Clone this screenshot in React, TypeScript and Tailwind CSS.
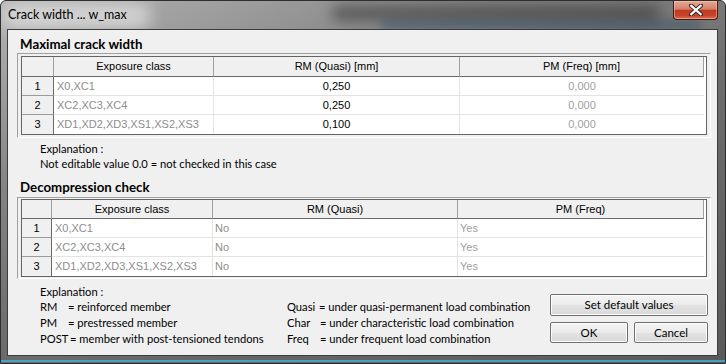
import type { FC, ReactNode } from 'react';

const UI = "font-['Lato','Noto_Sans',sans-serif]";
const GRID = "font-['Liberation_Sans',Arial,sans-serif] text-[11px]";

type Cell = { text: string; cls: string };

interface GridProps {
    cols: string;
    headers: string[];
    rows: Cell[][];
    headH: string;
    padY: string;
}

const Grid: FC<GridProps> = ({ cols, headers, rows, headH, padY }) => (
    <div className={`ml-[9px] w-[694px] border border-t-[#a0a0a0] border-l-[#a0a0a0] border-r-white border-b-white bg-[#f0f0f0] px-[3px] ${padY}`}>
        <div className={`grid border border-[#646464] bg-white ${GRID} ${cols}`}>
            <div className={`border-r border-b border-r-[#a0a0a0] border-b-[#696969] bg-[#f0f0f0] ${headH}`} />
            {headers.map((h) => (
                <div
                    key={h}
                    className={`flex items-center justify-center border-r border-b border-r-[#a0a0a0] border-b-[#696969] bg-[#f0f0f0] text-black last:border-r-0 ${headH}`}
                >
                    {h}
                </div>
            ))}
            {rows.map((row, i) => (
                <Row key={i} n={i + 1} cells={row} last={i === rows.length - 1} />
            ))}
        </div>
    </div>
);

const Row: FC<{ n: number; cells: Cell[]; last: boolean }> = ({ n, cells, last }) => (
    <>
        <div
            className={`flex h-[19px] items-center justify-center border-r border-r-[#696969] bg-[#f0f0f0] text-black ${last ? '' : 'border-b border-b-[#9a9a9a]'}`}
        >
            {n}
        </div>
        {cells.map((c, j) => (
            <div
                key={j}
                className={`flex h-[19px] items-center border-[#e3e3e3] ${j < cells.length - 1 ? 'border-r' : ''} ${last ? '' : 'border-b'} ${c.cls}`}
            >
                {c.text}
            </div>
        ))}
    </>
);

const classes = ['X0,XC1', 'XC2,XC3,XC4', 'XD1,XD2,XD3,XS1,XS2,XS3'];
const crack = ['0,250', '0,250', '0,100'];

const crackRows: Cell[][] = classes.map((c, i) => [
    { text: c, cls: 'pl-[3px] text-[#8d8d8d]' },
    { text: crack[i], cls: 'justify-center text-black' },
    { text: '0,000', cls: 'justify-center text-[#a0a0a0]' },
]);

const decoRows: Cell[][] = classes.map((c) => [
    { text: c, cls: 'pl-[3px] text-[#8d8d8d]' },
    { text: 'No', cls: 'pl-[2px] text-[#8d8d8d]' },
    { text: 'Yes', cls: 'pl-[2px] text-[#a0a0a0]' },
]);

const Button: FC<{ w: string; children: ReactNode }> = ({ w, children }) => (
    <div
        className={`flex items-center justify-center rounded-[2px] border border-[#707070] bg-[linear-gradient(#f4f4f4,#ebebeb_50%,#e2e2e2_51%,#dadada)] text-[11.5px] text-black shadow-[inset_0_0_0_1px_#fcfcfc] ${w}`}
    >
        {children}
    </div>
);

const CloseButton: FC = () => (
    <div className="absolute right-[7px] top-0 flex h-[19px] w-[45px] items-center justify-center rounded-b-[4px] border border-t-0 border-[#4a1a12] bg-[linear-gradient(#e7a995_0%,#d4806a_45%,#c13a20_52%,#c4452b_80%,#de7258_100%)] shadow-[inset_0_0_0_1px_rgba(255,210,200,0.45)]">
        <svg width="14" height="12" viewBox="0 0 14 12">
            <path d="M2 1.5 L12 10.5 M12 1.5 L2 10.5" stroke="#3b2a2a" strokeWidth="4.2" strokeLinecap="square" />
            <path d="M2.3 1.8 L11.7 10.2 M11.7 1.8 L2.3 10.2" stroke="#ffffff" strokeWidth="2.2" strokeLinecap="square" />
        </svg>
    </div>
);

const App: FC = () => (
    <div className={`relative h-[364px] w-[726px] overflow-hidden rounded-t-[6px] border border-[#2e2e2e] bg-[linear-gradient(160deg,#b4b4b4_0%,#848484_30%,#6c6c6c_55%,#5a5a5a_100%)] ${UI}`}>
        <div className="absolute left-[330px] top-[4px] h-[16px] w-[330px] rounded-full bg-[#262626] opacity-50 blur-[7px]" />
        <div className="absolute left-[380px] top-[20px] h-[8px] w-[320px] rounded-full bg-[#1f4660] opacity-50 blur-[5px]" />
        <div className="absolute left-0 top-[2px] h-[26px] w-[150px] rounded-full bg-[#e6e6e6] opacity-70 blur-[8px]" />
        <div className="relative flex h-[28px] items-center pl-[7px] text-[12.5px] text-black">Crack width ... w_max</div>
        <CloseButton />

        <div className="relative ml-[6px] h-[327px] w-[711px] border border-[#3c3c3c] bg-[#f0f0f0] text-[11.2px] text-black">
            <div className="ml-[12px] mt-[6px] h-[16px] text-[13.3px] font-bold leading-[16px]">Maximal crack width</div>
            <div className="mt-[1px]">
                <Grid
                    cols="grid-cols-[32px_160px_246px_244px]"
                    headers={['Exposure class', 'RM (Quasi) [mm]', 'PM (Freq) [mm]']}
                    rows={crackRows}
                    headH="h-[20px]"
                    padY="py-[2px]"
                />
            </div>

            <div className="ml-[32px] mt-[3px] leading-[15px]">
                <div>Explanation :</div>
                <div>Not editable value 0.0 = not checked in this case</div>
            </div>

            <div className="ml-[12px] mt-[8px] h-[16px] text-[13.3px] font-bold leading-[16px]">Decompression check</div>
            <div className="mt-[2px]">
                <Grid
                    cols="grid-cols-[30px_161px_245px_246px]"
                    headers={['Exposure class', 'RM (Quasi)', 'PM (Freq)']}
                    rows={decoRows}
                    headH="h-[19px]"
                    padY="py-[1px]"
                />
            </div>

            <div className="mt-[5px] flex leading-[16px]">
                <div className="ml-[32px] w-[247px] whitespace-nowrap">
                    <div className="h-[15px] leading-[15px]">Explanation :</div>
                    <div><span className="inline-block w-[28px]">RM</span>= reinforced member</div>
                    <div><span className="inline-block w-[28px]">PM</span>= prestressed member</div>
                    <div><span className="inline-block w-[30px]">POST</span>= member with post-tensioned tendons</div>
                </div>
                <div className="w-[263px] whitespace-nowrap pt-[15px]">
                    <div><span className="inline-block w-[32px]">Quasi</span>= under quasi-permanent load combination</div>
                    <div><span className="inline-block w-[33px]">Char</span>= under characteristic load combination</div>
                    <div><span className="inline-block w-[33px]">Freq</span>= under frequent load combination</div>
                </div>
                <div className="flex w-[158px] flex-col gap-[6px] pt-[10px]">
                    <Button w="h-[22px] w-[158px]">Set default values</Button>
                    <div className="flex gap-[6px]">
                        <Button w="h-[21px] w-[78px]">OK</Button>
                        <Button w="h-[21px] w-[74px]">Cancel</Button>
                    </div>
                </div>
            </div>
        </div>
        <div className="absolute bottom-[1px] left-0 h-[2px] w-full bg-[#3cb4d6] opacity-80" />
    </div>
);

export default App;
